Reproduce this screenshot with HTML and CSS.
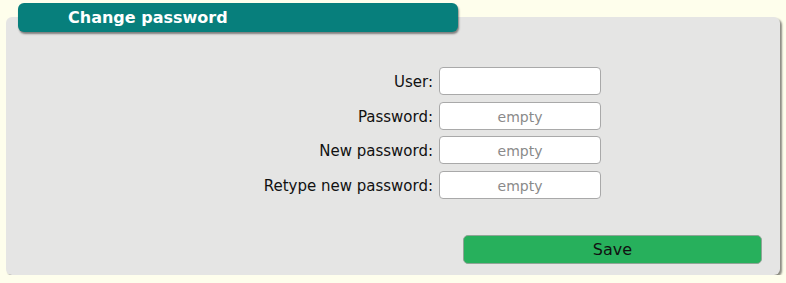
FILE: index.html
```html
<!DOCTYPE html>
<html>
<head>
<meta charset="utf-8">
<link rel="stylesheet" href="styles.css">
</head>
<body>
<div class="box">
  <div class="tab">Change password</div>
  <div class="panel">
    <form class="form">
      <label class="lbl" for="u">User:</label>
      <input class="field" id="u" type="text">
      <label class="lbl" for="p">Password:</label>
      <input class="field" id="p" type="password" placeholder="empty">
      <label class="lbl" for="n">New password:</label>
      <input class="field" id="n" type="password" placeholder="empty">
      <label class="lbl" for="r">Retype new password:</label>
      <input class="field" id="r" type="password" placeholder="empty">
    </form>
    <button class="save" type="button">Save</button>
  </div>
</div>
</body>
</html>
```
FILE: styles.css
```css
html, body {
  margin: 0;
  padding: 0;
  background: #fefeec;
  font-family: "DejaVu Sans", Verdana, sans-serif;
}
.box {
  padding: 3px 0 0 6px;
  width: 774px;
}
.tab {
  position: relative;
  z-index: 1;
  margin-left: 12px;
  width: 390px;
  height: 29px;
  padding-left: 50px;
  box-sizing: content-box;
  background: #077f7c;
  color: #fff;
  font-weight: bold;
  font-size: 16px;
  line-height: 29px;
  border-radius: 6px;
  box-shadow: 1px 2px 2px rgba(0, 0, 0, 0.45);
}
.panel {
  margin-top: -15px;
  height: 258px;
  box-sizing: border-box;
  background: #e5e5e4;
  border-radius: 6px;
  box-shadow: 2px 2px 2px rgba(0, 0, 0, 0.45);
  padding-top: 50px;
}
.form {
  display: grid;
  grid-template-columns: 427px 162px;
  column-gap: 6px;
  row-gap: 6.67px;
  align-items: baseline;
  margin: 0;
}
.lbl {
  text-align: right;
  font-size: 15px;
  color: #111;
}
.field {
  box-sizing: border-box;
  height: 28px;
  margin: 0;
  padding: 2px 4px 0;
  border: 1px solid #a9a9a9;
  border-radius: 4px;
  background: #fff;
  font-family: "DejaVu Sans", Verdana, sans-serif;
  font-size: 14px;
  text-align: center;
  outline: none;
}
.field::placeholder {
  color: #8a8a8a;
}
.save {
  display: block;
  margin: 36px 0 0 457px;
  width: 299px;
  height: 29px;
  background: #27b05c;
  border: 1px solid #8fa596;
  border-radius: 5px;
  color: #111;
  font-family: "DejaVu Sans", Verdana, sans-serif;
  font-size: 16px;
  padding: 0;
}
```
